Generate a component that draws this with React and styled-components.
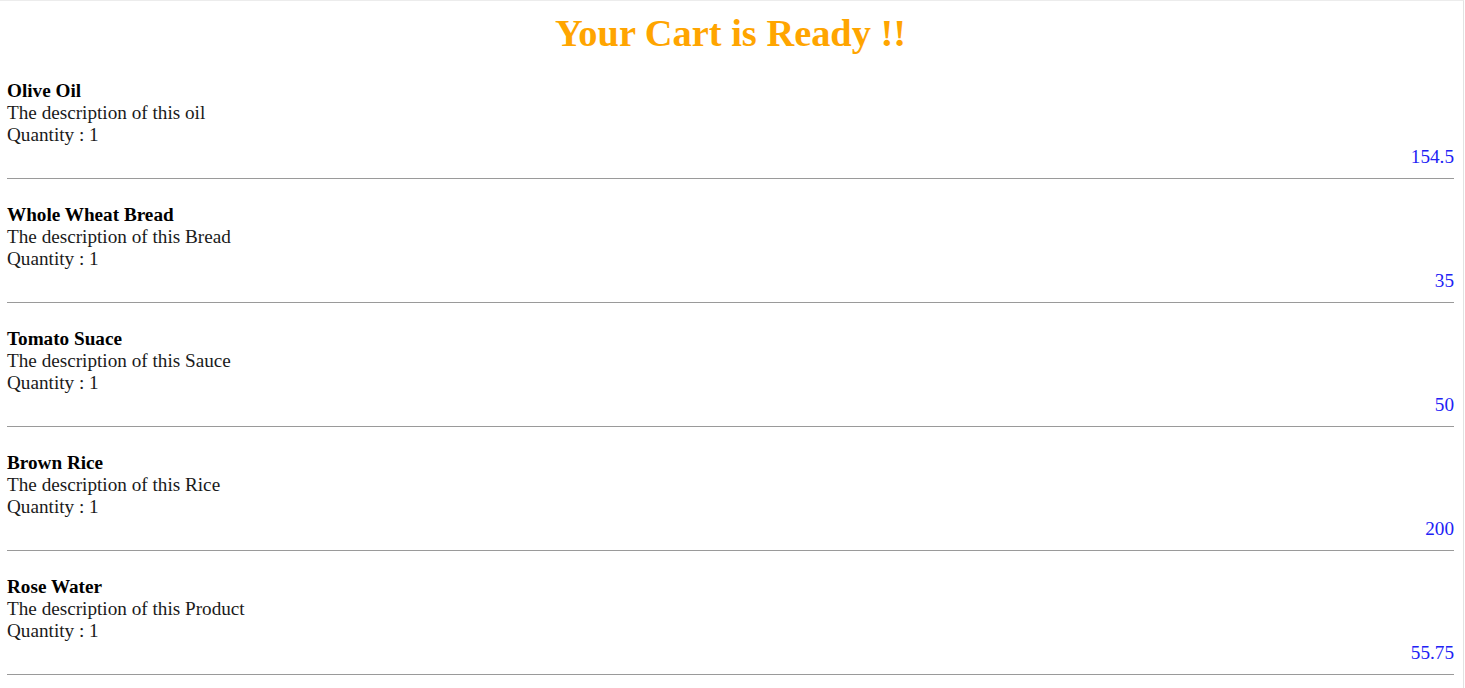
import React from "react";
import styled, { createGlobalStyle } from "styled-components";

const GlobalStyle = createGlobalStyle`
  html, body { margin: 0; padding: 0; background: #ffffff; }
  body { font-family: "Liberation Serif", "Times New Roman", serif; }
`;

const Frame = styled.div`
  width: 1464px;
  height: 688px;
  box-sizing: border-box;
  border-top: 1px solid #ececec;
  border-right: 1px solid #e2e2e2;
  overflow: hidden;
`;

const Page = styled.main`
  width: 1447px;
  padding: 10px 0 0 7px;
  font-size: 19.2px;
  line-height: 22px;
  color: #111;
`;

const Title = styled.h1`
  margin: 0;
  text-align: center;
  font-size: 38.4px;
  line-height: 44px;
  font-weight: bold;
  color: #ffa500;
`;

const List = styled.ul`
  list-style: none;
  margin: 0;
  padding: 0;
`;

const Item = styled.li`
  display: flex;
  flex-direction: column;
  padding: 25px 0 10px;
  border-bottom: 1px solid #9a9a9a;
`;

const Name = styled.span`
  font-weight: bold;
  color: #000;
`;

const Line = styled.span`
  color: #1a1a1a;
`;

const Price = styled.span`
  text-align: right;
  color: #2121f5;
`;

const items = [
  { name: "Olive Oil", desc: "The description of this oil", qty: 1, price: "154.5" },
  { name: "Whole Wheat Bread", desc: "The description of this Bread", qty: 1, price: "35" },
  { name: "Tomato Suace", desc: "The description of this Sauce", qty: 1, price: "50" },
  { name: "Brown Rice", desc: "The description of this Rice", qty: 1, price: "200" },
  { name: "Rose Water", desc: "The description of this Product", qty: 1, price: "55.75" },
];

export default function App() {
  return (
    <>
      <GlobalStyle />
      <Frame>
        <Page>
          <Title>Your Cart is Ready !!</Title>
          <List>
            {items.map((it) => (
              <Item key={it.name}>
                <Name>{it.name}</Name>
                <Line>{it.desc}</Line>
                <Line>Quantity : {it.qty}</Line>
                <Price>{it.price}</Price>
              </Item>
            ))}
          </List>
        </Page>
      </Frame>
    </>
  );
}
